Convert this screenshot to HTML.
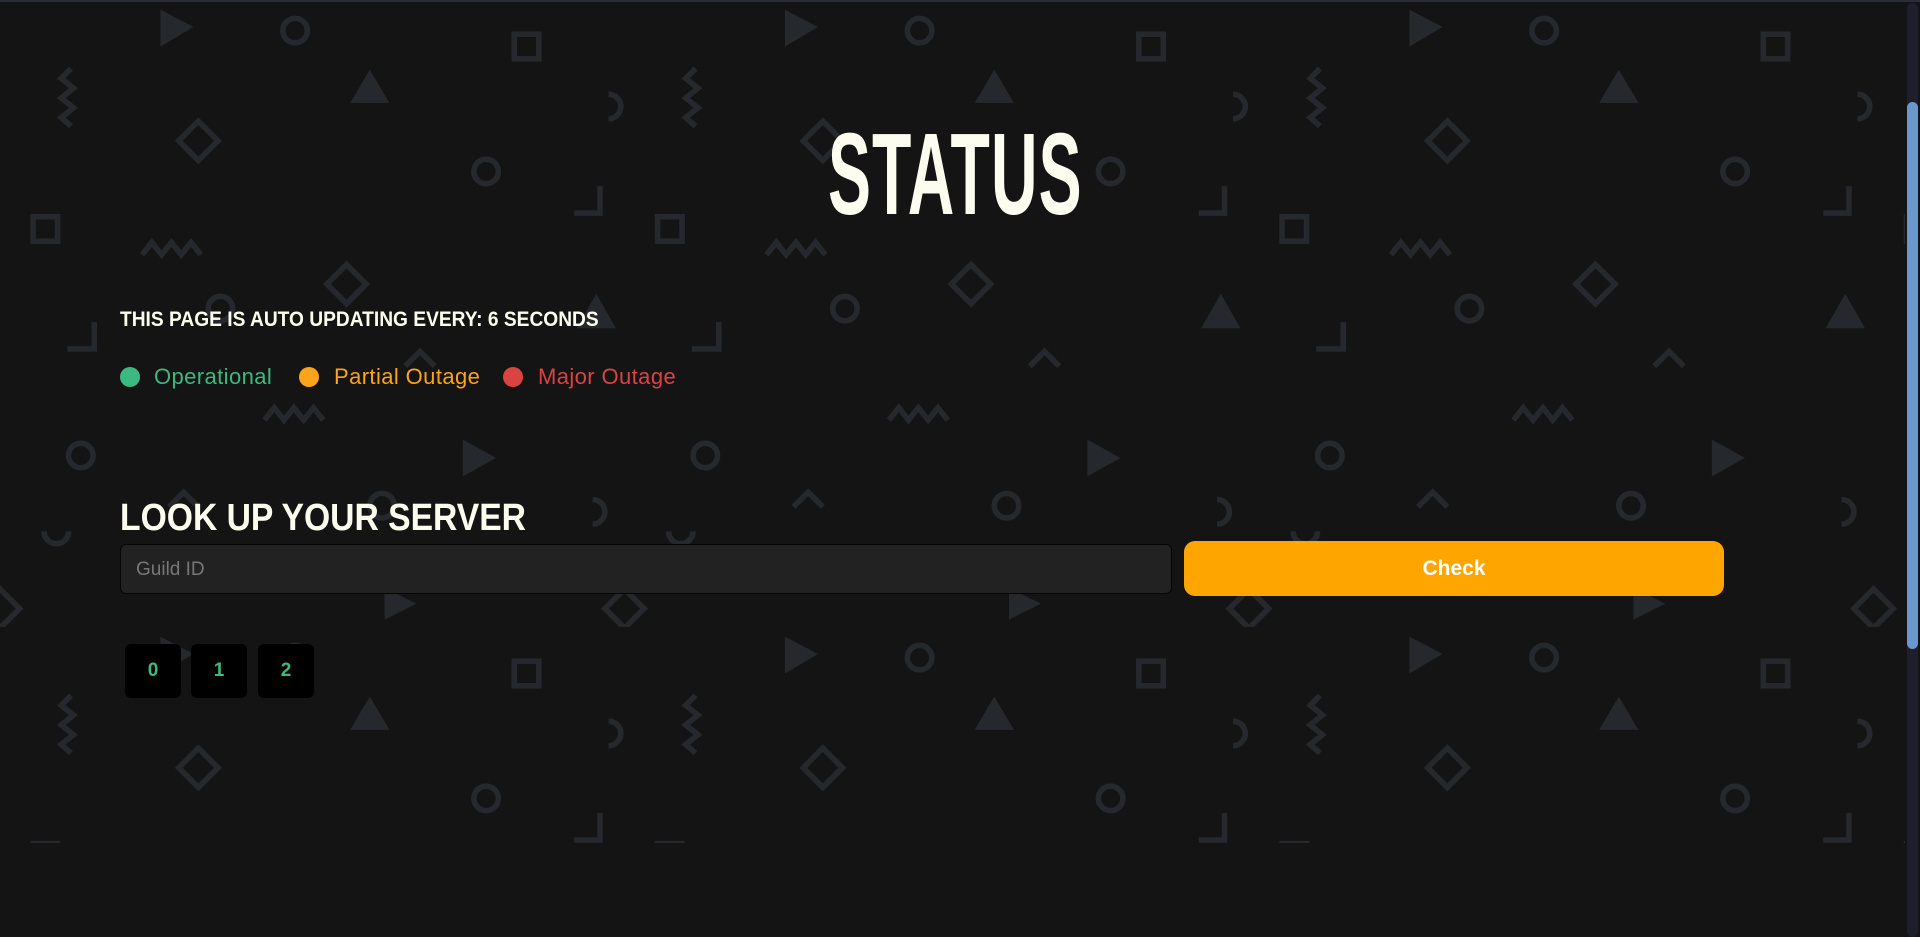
<!DOCTYPE html>
<html><head><meta charset="utf-8"><style>
html,body{margin:0;padding:0;width:1920px;height:937px;overflow:hidden;background:#141414;font-family:"Liberation Sans",sans-serif;}
.abs{position:absolute;}
#bg{position:absolute;left:0;top:0;}
.title{left:828px;top:116px;font-size:116px;font-weight:bold;color:#fdfdef;transform:scaleX(0.555);transform-origin:left top;line-height:1;white-space:nowrap;letter-spacing:2px}
.upd{left:120px;top:309px;font-size:21px;font-weight:bold;color:#fdfdef;transform:scaleX(0.913);transform-origin:left top;white-space:nowrap;line-height:1}
.dot{width:20px;height:20px;border-radius:50%;top:367px}
.lg{top:365px;font-size:22px;line-height:24px;white-space:nowrap;letter-spacing:0.4px}
.look{left:120px;top:499px;font-size:38px;font-weight:bold;color:#fdfdef;transform:scaleX(0.886);transform-origin:left top;white-space:nowrap;line-height:1}
.inp{left:120px;top:544px;width:1050px;height:48px;background:#222;border:1px solid #050505;border-radius:6px;}
.inp span{position:absolute;left:15px;top:14px;color:#777;font-size:19px}
.btn{left:1184px;top:541px;width:540px;height:55px;background:#ffa500;border-radius:11px;color:#fff;font-weight:bold;font-size:21px;text-align:center;line-height:55px}
.box{top:644px;width:56px;height:54px;background:#000;border-radius:6px;color:#3cb97e;font-weight:bold;font-size:19px;text-align:center;line-height:54px}
</style></head><body>
<svg id="bg" width="1920" height="937">
<defs>
<pattern id="p" width="510" height="512" patternUnits="userSpaceOnUse" patternTransform="scale(1.2245)">
<g fill="none" stroke="#25292d" stroke-width="4.5" stroke-linejoin="miter">
<circle cx="241" cy="25" r="10"/>
<rect x="420" y="28" width="20" height="20"/>
<polyline points="58,56 50,64 60,72 50,80 60,88 50,96 58,103"/>
<path d="M497,77 a10,10 0 0 1 0,20"/>
<polygon points="162,99 178,115 162,131 146,115"/>
<circle cx="397" cy="140" r="10"/>
<polyline points="469,174 490,174 490,152"/>
<rect x="27" y="177" width="20" height="20"/>
<polyline points="116,208 124,198 132,208 140,198 148,208 156,198 164,208"/>
<polygon points="283,216 299,232 283,248 267,232"/>
<circle cx="180" cy="252" r="10"/>
<polyline points="55,285 77,285 77,263"/>
<polyline points="331,299 343,287 355,299"/>
<polyline points="216,343 224,333 232,343 240,333 248,343 256,333 264,343"/>
<circle cx="66" cy="372" r="10"/>
<polyline points="138,414 150,402 162,414"/>
<circle cx="312" cy="413" r="10"/>
<path d="M484,408 a10,10 0 0 1 0,20"/>
<path d="M36,434 a10,10 0 0 0 20,0"/>
<polygon points="0,481 16,497 0,513 -16,497"/>
<polygon points="510,481 526,497 510,513 494,497"/>
</g>
<g fill="#25292d">
<polygon points="131,8 158,22 131,38"/>
<polygon points="286,84 302,57 318,84"/>
<polygon points="471,268 487,240 503,268"/>
<polygon points="378,359 405,374 378,389"/>
<polygon points="314,480 340,493 314,506"/>
</g>
</pattern>
</defs>
<rect x="0" y="0" width="1905" height="843" fill="url(#p)"/>
<rect x="0" y="0" width="1920" height="2" fill="#2a2c3a"/>
<rect x="1907" y="3" width="11" height="934" rx="5.5" fill="#1e1f2a"/>
<rect x="1907" y="102" width="11" height="547" rx="5.5" fill="#6b98cc"/>
</svg>
<div class="abs title">STATUS</div>
<div class="abs upd">THIS PAGE IS AUTO UPDATING EVERY: 6 SECONDS</div>
<div class="abs dot" style="left:120px;background:#3cb97e"></div>
<div class="abs lg" style="left:154px;color:#3cb97e">Operational</div>
<div class="abs dot" style="left:299px;background:#fca31c"></div>
<div class="abs lg" style="left:334px;color:#fca31c">Partial Outage</div>
<div class="abs dot" style="left:503px;background:#db4242"></div>
<div class="abs lg" style="left:538px;color:#db4242">Major Outage</div>
<div class="abs look">LOOK UP YOUR SERVER</div>
<div class="abs inp"><span>Guild ID</span></div>
<div class="abs btn">Check</div>
<div class="abs box" style="left:125px">0</div>
<div class="abs box" style="left:191px">1</div>
<div class="abs box" style="left:258px">2</div>
</body></html>
